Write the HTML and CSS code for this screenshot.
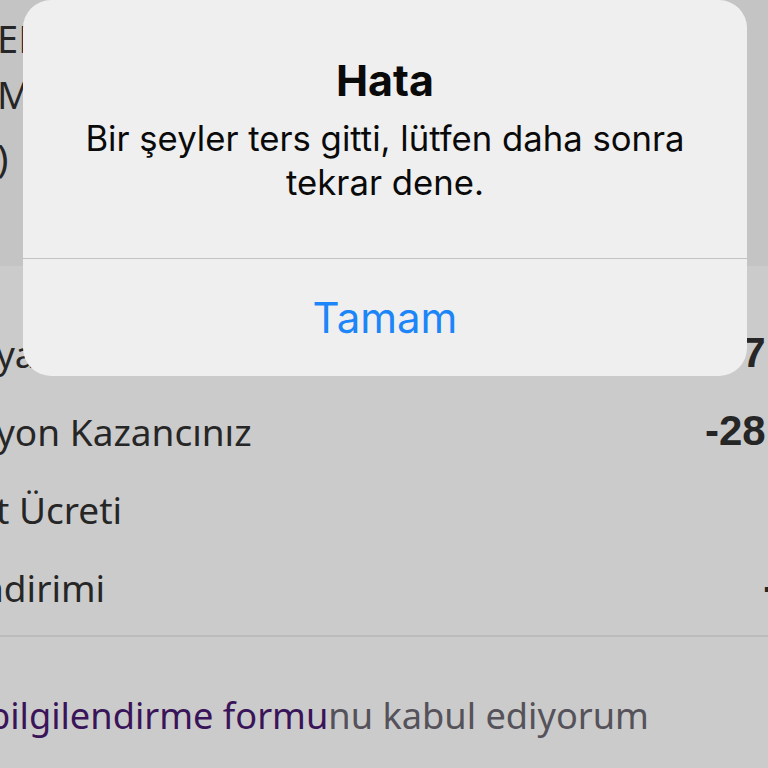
FILE: index.html
```html
<!DOCTYPE html>
<html lang="tr">
<head>
<meta charset="utf-8">
<title>Hata</title>
<link rel="stylesheet" href="styles.css">
</head>
<body>
<div class="page">
  <section class="top">
    <div class="top-line l1">ENDEKS</div>
    <div class="top-line l2">MİKTAR</div>
    <div class="top-line l3">)</div>
  </section>
  <section class="summary">
    <div class="row"><span class="label">ya</span><span class="value">357,00</span></div>
    <div class="row"><span class="label">yon Kazancınız</span><span class="value">-28,50</span></div>
    <div class="row"><span class="label">t Ücreti</span><span class="value">0</span></div>
    <div class="row"><span class="label label-cut">ndirimi</span><span class="value">-25</span></div>
    <div class="divider"></div>
    <p class="consent"><span class="link">bilgilendirme formu</span>nu kabul ediyorum</p>
  </section>
</div>

<div class="alert" role="alertdialog">
  <div class="alert-body">
    <h1 class="alert-title">Hata</h1>
    <p class="alert-msg">Bir şeyler ters gitti, lütfen daha sonra tekrar dene.</p>
  </div>
  <div class="alert-sep"></div>
  <button class="alert-btn">Tamam</button>
</div>
</body>
</html>
```
FILE: styles.css
```css
html, body {
  margin: 0;
  padding: 0;
  width: 768px;
  height: 768px;
  overflow: hidden;
  background: #cbcbcb;
}

.page {
  font-family: "Noto Sans", "Open Sans", sans-serif;
  color: #262626;
}

.top {
  height: 266px;
  background: #c4c4c4;
  padding-top: 10px;
  box-sizing: border-box;
  margin-left: -3px;
}

.top-line {
  font-size: 38px;
  height: 56px;
  line-height: 56px;
  white-space: nowrap;
}

.top-line.l3 {
  margin-top: 7px;
}

.summary {
  padding-top: 48px;
  margin-right: -56px;
}

.row {
  height: 78px;
  display: flex;
  align-items: center;
  justify-content: space-between;
}

.label {
  font-size: 37px;
  margin-left: -4px;
  white-space: nowrap;
}

.label-cut {
  margin-left: -19px;
}

.value {
  font-family: "Liberation Sans", Arial, sans-serif;
  font-weight: 700;
  font-size: 42px;
  white-space: nowrap;
}

.divider {
  height: 2px;
  background: #bcbcbc;
  margin-top: 9px;
}

.consent {
  margin: 54px 0 0 -12px;
  font-size: 36.2px;
  line-height: 48px;
  color: #55525a;
  white-space: nowrap;
}

.consent .link {
  color: #3a1459;
}

/* iOS alert overlay */
.alert {
  position: absolute;
  left: 23px;
  top: 0;
  width: 724px;
  height: 376px;
  background: #efefef;
  border-radius: 28px;
  display: flex;
  flex-direction: column;
  font-family: Inter, "Liberation Sans", sans-serif;
  overflow: hidden;
}

.alert-body {
  height: 258px;
  padding: 54px 40px 0;
  box-sizing: border-box;
  text-align: center;
}

.alert-title {
  margin: 0;
  font-size: 43px;
  line-height: 52px;
  font-weight: 700;
  color: #0a0a0a;
}

.alert-msg {
  margin: 10px 0 0;
  font-size: 34.7px;
  line-height: 44px;
  color: #0a0a0a;
}

.alert-sep {
  height: 1px;
  background: #c2c2c2;
}

.alert-btn {
  flex: 1;
  border: 0;
  background: transparent;
  font-family: Inter, "Liberation Sans", sans-serif;
  font-size: 42px;
  color: #1c85f8;
  padding: 0;
}
```
